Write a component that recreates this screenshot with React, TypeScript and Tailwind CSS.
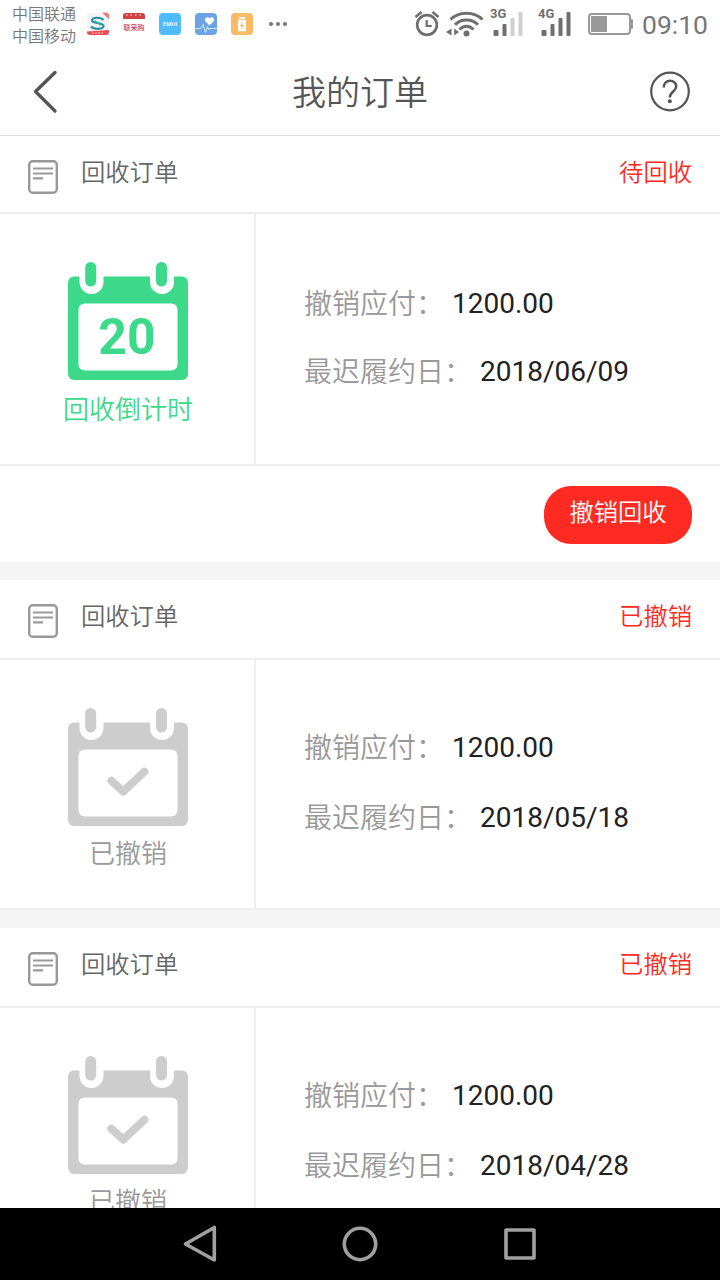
import clsx from "clsx"

type Order = {
  id: number
  status: string
  amount: string
  deadline: string
  daysLeft?: number
}

const orders: Order[] = [
  { id: 1, status: "待回收", amount: "1200.00", deadline: "2018/06/09", daysLeft: 20 },
  { id: 2, status: "已撤销", amount: "1200.00", deadline: "2018/05/18" },
  { id: 3, status: "已撤销", amount: "1200.00", deadline: "2018/04/28" },
]

function AppIcons() {
  return (
    <div className="flex items-center gap-3">
      <svg width="24" height="24" viewBox="0 0 24 24">
        <rect x="1" y="1" width="22" height="22" rx="3" fill="#f4f4f4" />
        <path d="M16 0.5h4a3 3 0 0 1 3 3v4z" fill="#ef7a80" />
        <path d="M17.500 8C15 4.800 6 5 6 8.500C6 11.800 17.500 10.200 17.500 14C17.500 17.500 8 17.800 5 14.500" fill="none" stroke="#2c8fa8" strokeWidth="2.200" />
        <path d="M9 8.500C10 11 14 10.800 14.500 13.500" fill="none" stroke="#2fb59a" strokeWidth="1.500" />
        <path d="M1 19.500L23 18V20a3 3 0 0 1-3 3H4a3 3 0 0 1-3-3z" fill="#ef4b52" />
        <path d="M6 21h12" stroke="#ffc9c9" strokeWidth="1" strokeDasharray="2 1" />
      </svg>
      <svg width="24" height="24" viewBox="0 0 24 24">
        <path d="M4 1h16a3 3 0 0 1 3 3v3H1V4a3 3 0 0 1 3-3z" fill="#cf4143" />
        <path d="M4 3h16" stroke="#f3c1c1" strokeWidth="1.500" strokeDasharray="1.500 3" />
        <text x="12" y="17.500" textAnchor="middle" fontSize="7" fontWeight="500" fill="#cf3a3c" fontFamily="Noto Sans CJK SC">联采购</text>
      </svg>
      <svg width="24" height="24" viewBox="0 0 24 24">
        <rect x="1" y="1" width="22" height="22" rx="4" fill="#4fbdfc" />
        <text x="12" y="14" textAnchor="middle" fontSize="6" fontWeight="500" fill="#fff" fontFamily="Roboto">EMUI</text>
      </svg>
      <svg width="24" height="24" viewBox="0 0 24 24">
        <rect x="1" y="1" width="22" height="22" rx="4" fill="#6aa3e6" />
        <path d="M15.500 13.500L11.600 9.600C9.300 6.800 13 3.500 15.500 6.300C18 3.500 21.700 6.800 19.400 9.600z" fill="#fff" />
        <path d="M1.500 16.500h5.500l2-4l2.500 8l2-6l1.500 3.500l1-1.500h7" fill="none" stroke="#d6e8ff" strokeWidth="1" />
      </svg>
      <svg width="24" height="24" viewBox="0 0 24 24">
        <rect x="1" y="1" width="22" height="22" rx="4" fill="#fbba66" />
        <rect x="9" y="5" width="6" height="1.800" fill="#fff" />
        <rect x="8" y="7.800" width="8" height="11.500" rx="1" fill="#fff" />
        <path d="M12.800 9.500l-3 4.500h2l-.6 3.500l3-4.500h-2z" fill="#fbba66" />
      </svg>
    </div>
  )
}

function Signal({ label, weak }: { label: string; weak?: boolean }) {
  const rest = weak ? "#cfcfcf" : "#6f6f6f"
  return (
    <svg width="36" height="32" viewBox="0 0 36 32">
      <text x="0" y="12" fontSize="13" fontWeight="700" fill="#6f6f6f" fontFamily="Roboto">{label}</text>
      <rect x="3.500" y="24" width="5" height="6" rx="1" fill="#6f6f6f" />
      <rect x="12.500" y="18" width="4" height="12" rx="1" fill="#6f6f6f" />
      <rect x="20.500" y="12" width="4" height="18" rx="1" fill={rest} />
      <rect x="28.500" y="6" width="4" height="24" rx="1" fill={rest} />
    </svg>
  )
}

function StatusBar() {
  return (
    <div className="flex h-12 shrink-0 items-start text-[#777777]">
      <div className="ml-3 mt-1 flex w-[66px] flex-col text-base leading-[22px]">
        <span>中国联通</span>
        <span>中国移动</span>
      </div>
      <div className="ml-2 mt-3">
        <AppIcons />
      </div>
      <svg className="ml-3.5 mt-[21px]" width="20" height="6" viewBox="0 0 20 6" fill="#777">
        <circle cx="3" cy="3" r="2" />
        <circle cx="10" cy="3" r="2" />
        <circle cx="17" cy="3" r="2" />
      </svg>

      <svg className="ml-auto mt-2.5" width="26" height="28" viewBox="0 0 26 28" fill="none" stroke="#6f6f6f">
        <circle cx="13" cy="15" r="9.800" strokeWidth="2.700" />
        <path d="M12.700 10v6h5" strokeWidth="2.200" />
        <path d="M1.500 7L7.500 2M24.500 7L18.500 2" strokeWidth="2.600" />
      </svg>
      <svg className="ml-1.5 mt-2.5" width="38" height="28" viewBox="0 0 38 28" fill="none" stroke="#6f6f6f" strokeWidth="3">
        <path d="M4.500 9.500C13 1 28 1 36.500 9.500" />
        <path d="M9 14.800C15 8.500 26 8.500 32 14.800" />
        <path d="M13.500 19.500C17.500 15 23.500 15 27.500 19.500" />
        <circle cx="20.500" cy="23.500" r="3" fill="#6f6f6f" stroke="none" />
        <path d="M5.500 18.500v7L0 22zM8.200 18.500v7L13 22z" fill="#6f6f6f" stroke="none" />
      </svg>
      <div className="ml-1.5 mt-1.5">
        <Signal label="3G" weak />
      </div>
      <div className="ml-3 mt-1.5">
        <Signal label="4G" />
      </div>
      <svg className="ml-3.5 mt-3" width="46" height="24" viewBox="0 0 46 24">
        <rect x="1" y="2" width="41" height="20" rx="3" fill="none" stroke="#999" strokeWidth="2" />
        <rect x="3" y="4" width="16" height="16" fill="#999" />
        <path d="M43 7h1a1 1 0 0 1 1 1v8a1 1 0 0 1-1 1h-1z" fill="#999" />
      </svg>
      <span className="ml-2 mr-3 mt-[11px] text-[26.5px] font-normal leading-7">09:10</span>
    </div>
  )
}

function TitleBar() {
  return (
    <header className="flex h-[88px] shrink-0 items-start justify-between border-b border-[#d9dde1] pl-8 pr-7 text-[#555555]">
      <svg className="mt-5" width="28" height="46" viewBox="0 0 28 46" fill="none" stroke="#555" strokeWidth="3.400">
        <path d="M23 4.500L3.500 23.500L23 43" strokeLinecap="round" strokeLinejoin="round" />
      </svg>
      <h1 className="ml-3 mt-[22px] text-[34px] leading-[46px]">我的订单</h1>
      <svg className="mt-[22px]" width="44" height="44" viewBox="0 0 44 44" fill="none" stroke="#555" strokeWidth="2.200">
        <circle cx="22" cy="21.500" r="18.800" />
        <path d="M15.800 17.500C15.800 8.500 28.200 9 28.200 16.500C28.200 21.500 21.800 21.500 21.800 27.500" strokeWidth="2.500" />
        <circle cx="21.800" cy="31.300" r="2" fill="#555" stroke="none" />
      </svg>
    </header>
  )
}

function CalendarIcon({ daysLeft }: { daysLeft?: number }) {
  const color = daysLeft ? "#3cd98a" : "#cdcdcd"
  return (
    <svg width="120" height="118" viewBox="0 0 120 118">
      <rect y="14.500" width="120" height="103.500" rx="6" fill={color} />
      <path d="M11.500 12V20a12 12 0 0 0 24 0V12zM82 12V20a12 12 0 0 0 24 0V12z" fill="#fff" />
      <rect x="17.200" y="0" width="11" height="24.500" rx="5.500" fill={color} />
      <rect x="88" y="0" width="11" height="24.500" rx="5.500" fill={color} />
      <rect x="10.500" y="41.500" width="99" height="67" rx="6" fill="#fff" />
      {daysLeft ? (
        <text x="59" y="92" textAnchor="middle" fontSize="50" fontWeight="700" fill={color} fontFamily="Roboto">
          {daysLeft}
        </text>
      ) : (
        <path d="M43.300 72.700L55.300 83.500L76.500 63.700" fill="none" stroke={color} strokeWidth="8" strokeLinecap="round" strokeLinejoin="round" />
      )}
    </svg>
  )
}

function Field({ label, value }: { label: string; value: string }) {
  return (
    <p className="flex h-10">
      <span className="pt-px">{label}</span>
      <span className="ml-2 font-normal text-[#222222]">{value}</span>
    </p>
  )
}

function OrderCard({ order }: { order: Order }) {
  const active = order.daysLeft !== undefined

  return (
    <section className="mb-[18px] shrink-0 bg-white">
      <div className={clsx("flex items-start border-b-2 border-[#eeeeee] pl-7 pr-7", active ? "h-[78px]" : "h-20")}>
        <svg className="mt-6" width="30" height="34" viewBox="0 0 30 34" fill="none" stroke="#999">
          <rect x="1.200" y="1.200" width="27.600" height="31.600" rx="3.500" strokeWidth="2.400" />
          <path d="M5 8.500h20M5 13.500h20M5 18.300h10" strokeWidth="2.200" />
        </svg>
        <span className="ml-[23px] mt-[19px] text-[24.3px] leading-9 text-[#666666]">回收订单</span>
        <span className="ml-auto mt-[19px] text-[24.3px] leading-9 text-[#ff2a21]">{order.status}</span>
      </div>

      <div className={clsx("flex border-b-2 border-[#eeeeee]", active ? "h-[252px]" : "h-[250px]")}>
        <div className="flex w-64 flex-col items-center border-r-2 border-[#eeeeee] pl-0.5 pt-12">
          <CalendarIcon daysLeft={order.daysLeft} />
          <span
            className={clsx(
              "text-[26px] leading-9",
              active ? "mt-3 text-[#3cd98a]" : "mt-2.5 text-[#999999]"
            )}
          >
            {active ? "回收倒计时" : "已撤销"}
          </span>
        </div>
        <div className={clsx("flex flex-col pl-12 text-[28px] leading-10 text-[#999999]", active ? "gap-7 pt-[70px]" : "gap-[30px] pt-[68px]")}>
          <Field label="撤销应付：" value={order.amount} />
          <Field label="最迟履约日：" value={order.deadline} />
        </div>
      </div>

      {active && (
        <div className="flex h-24 items-start justify-end pr-7 pt-5">
          <button className="h-[58px] w-[148px] rounded-[27px] bg-[#ff2a21] pb-1 text-[24.3px] text-white">撤销回收</button>
        </div>
      )}
    </section>
  )
}

function NavigationBar() {
  return (
    <nav className="flex h-[72px] shrink-0 items-center justify-center gap-[120px] bg-black">
      <svg width="40" height="40" viewBox="0 0 40 40" fill="none" stroke="#a0a0a0" strokeWidth="3.600" strokeLinejoin="round">
        <path d="M34.300 3.500V36L5.500 20z" />
      </svg>
      <svg width="40" height="40" viewBox="0 0 40 40" fill="none" stroke="#a0a0a0" strokeWidth="3.600">
        <circle cx="20" cy="20" r="15.700" />
      </svg>
      <svg width="40" height="40" viewBox="0 0 40 40" fill="none" stroke="#a0a0a0" strokeWidth="3.600" strokeLinejoin="round">
        <rect x="6" y="6" width="28" height="28" />
      </svg>
    </nav>
  )
}

export default function App() {
  return (
    <div className="flex h-[1280px] w-[720px] flex-col overflow-hidden bg-white font-['Roboto','Noto_Sans_CJK_SC',sans-serif] font-[350]">
      <StatusBar />
      <TitleBar />
      <main className="flex min-h-0 flex-1 flex-col overflow-hidden bg-[#f5f5f5]">
        {orders.map((order) => (
          <OrderCard key={order.id} order={order} />
        ))}
      </main>
      <NavigationBar />
    </div>
  )
}
